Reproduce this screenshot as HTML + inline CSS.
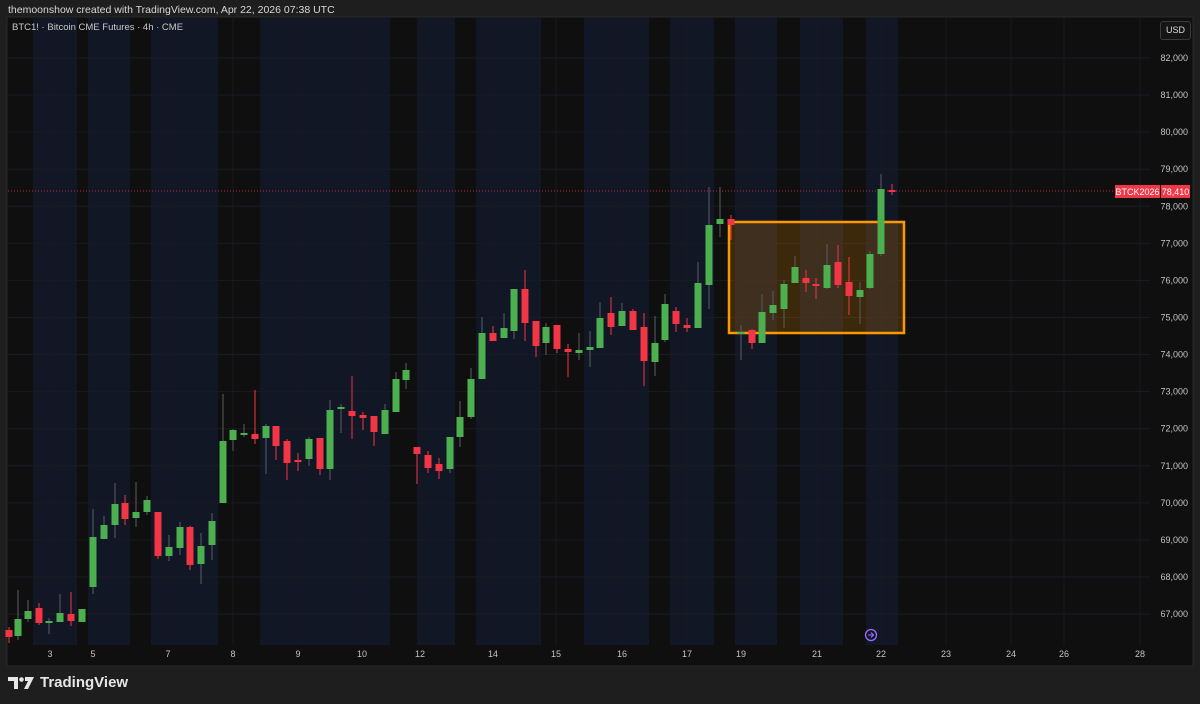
<!DOCTYPE html>
<html><head><meta charset="utf-8"><style>
html,body{margin:0;padding:0;background:#1e1e1e;width:1200px;height:704px;overflow:hidden;font-family:"Liberation Sans",sans-serif}
#hdr{position:absolute;left:8px;top:4px;font-size:10.5px;color:#d8d8d8}
#chart{position:absolute;left:0;top:0}
#leg{position:absolute;left:12px;top:22px;font-size:9.5px;color:#c8c8c8}
#usd{position:absolute;left:1160px;top:21px;width:29px;height:17px;border:1px solid #3a3a3a;border-radius:3px;background:#151515;color:#ddd;font-size:9px;line-height:17px;text-align:center}
#logo{position:absolute;left:8px;top:674px;color:#e6e6e6;font-size:15px;font-weight:bold;display:flex;align-items:center}
</style></head><body>
<svg id="chart" width="1200" height="704" xmlns="http://www.w3.org/2000/svg"></svg>
<div id="hdr">themoonshow created with TradingView.com, Apr 22, 2026 07:38 UTC</div>
<div id="leg">BTC1! · Bitcoin CME Futures · 4h · CME</div>
<div id="usd">USD</div>
<div id="logo"><svg width="28" height="14" viewBox="0 0 28 14"><path d="M0 1h10v12H6V5H0z" fill="#e6e6e6"/><circle cx="13.5" cy="3.5" r="2.3" fill="#e6e6e6"/><path d="M17 1h9l-6 12h-4l4-8h-3z" fill="#e6e6e6"/></svg><span style="margin-left:4px">TradingView</span></div>
<script>
var s=document.getElementById('chart'),h='';
function r(x,y,w,hh,f,ex){h+='<rect x="'+x+'" y="'+y+'" width="'+w+'" height="'+hh+'" fill="'+f+'" '+(ex||'')+'/>';}
function l(x1,y1,x2,y2,c,ex){h+='<line x1="'+x1+'" y1="'+y1+'" x2="'+x2+'" y2="'+y2+'" stroke="'+c+'" '+(ex||'')+'/>';}
function t(x,y,tx,c,a){h+='<text x="'+x+'" y="'+y+'" fill="'+c+'" font-size="9" font-family="Liberation Sans, sans-serif" text-anchor="'+(a||'middle')+'">'+tx+'</text>';}
r(7,17,1186,649,'#0f0f0f','stroke="#2a2a2a"');
var bands=[[33,77],[88,130],[151,218],[260,390],[417,455],[476,541],[584,649],[670,714],[735,777],[800,843],[866,898]];
bands.forEach(function(b){r(b[0],18,b[1]-b[0],627,'#121726');});
for(var i=0;i<16;i++){var y=58+i*37.07;l(8,y,1150,y,'#191b22');t(1188,y+3,(82-i)+',000','#c4c4c4','end');}
var dx=[[50,3],[93,5],[168,7],[233,8],[298,9],[362,10],[420,12],[493,14],[556,15],[622,16],[687,17],[741,19],[817,21],[881,22],[946,23],[1011,24],[1064,26],[1140,28]];
dx.forEach(function(d){l(d[0],18,d[0],645,'#171a24');t(d[0],657,d[1],'#c4c4c4');});
r(729,222,175,111,'rgba(255,152,0,0.19)','stroke="#ff9800" stroke-width="2.5"');
l(8,191,1115,191,'#f23645','stroke-dasharray="1,2" stroke-width="0.8"');
var G='#4caf50',R='#f23645';
var c=[[9,630,637,627,643,R],[18,619,636,590,640,G],[28,611,619,600,622,G],[39,608,623,603,625,R],[49,621,623,618,634,G],[60,613,622,594,622,G],[71,614,621,592,626,R],[82,609,622,609,622,G],[93,537,587,509,594,G],[104,525,539,516,539,G],[115,504,525,483,538,G],[125,503,519,495,525,R],[136,512,518,482,527,G],[147,500,512,496,515,G],[158,512,556,512,559,R],[169,547,556,535,561,G],[180,527,548,522,555,G],[190,527,565,526,570,R],[201,546,564,533,584,G],[212,521,545,513,560,G],[223,441,503,394,503,G],[233,430,440,429,451,G],[244,433,435,424,437,G],[255,434,439,390,444,R],[266,426,438,424,474,G],[276,426,446,426,460,R],[287,441,463,439,480,R],[298,460,462,453,471,R],[309,439,459,437,466,G],[320,438,469,438,475,R],[330,410,469,400,480,G],[341,407,409,404,433,G],[352,411,416,376,439,R],[363,415,418,412,430,R],[374,416,432,416,446,R],[385,410,434,404,434,G],[396,379,412,372,412,G],[406,370,380,363,389,G],[417,447,454,447,484,R],[428,455,468,451,473,R],[439,464,471,458,479,R],[450,437,469,437,473,G],[460,417,437,401,447,G],[471,379,417,368,419,G],[482,333,379,317,379,G],[493,333,341,326,341,R],[504,328,338,313,338,G],[514,289,331,289,339,G],[525,289,323,270,341,R],[536,321,346,321,357,R],[546,327,343,323,355,G],[557,325,349,325,353,R],[568,349,352,344,377,R],[579,350,353,333,360,G],[590,347,350,331,367,G],[600,318,348,302,348,G],[611,313,327,297,335,R],[622,311,326,303,326,G],[633,311,330,309,330,R],[644,327,361,313,386,R],[655,343,362,316,376,G],[665,304,340,294,342,G],[676,311,324,307,332,R],[687,325,328,318,332,R],[698,283,328,262,328,G],[709,225,285,187,309,G],[720,219,224,187,237,G],[731,219,225,215,240,R],[741,332,334,325,360,G],[752,330,343,329,349,R],[762,312,343,294,343,G],[773,305,313,291,320,G],[784,284,309,280,328,G],[795,267,283,256,283,G],[806,278,283,270,292,R],[816,284,286,278,299,R],[827,265,288,244,289,G],[838,262,285,245,288,R],[849,282,296,257,315,R],[860,290,297,282,324,G],[870,254,288,251,289,G],[881,189,254,174,256,G],[892,190,192,184,195,R]];
c.forEach(function(k){var wc=k[5]==G?'#5a5d66':R;l(k[0],k[3],k[0],k[4],wc,'stroke-width="1"');r(k[0]-3.5,k[1],7,Math.max(1.5,k[2]-k[1]),k[5]);});
h+='<circle cx="871" cy="635" r="5.5" fill="none" stroke="#9c6cff" stroke-width="1.3"/><path d="M868 635h5M871 632.5l2.5 2.5-2.5 2.5" stroke="#9c6cff" fill="none" stroke-width="1.1"/>';
r(1115,185,45,13,R);r(1161,185,29,13,R);
t(1137.5,195,'BTCK2026','#fff');t(1175.5,195,'78,410','#fff');
s.innerHTML=h;
</script>
</body></html>
